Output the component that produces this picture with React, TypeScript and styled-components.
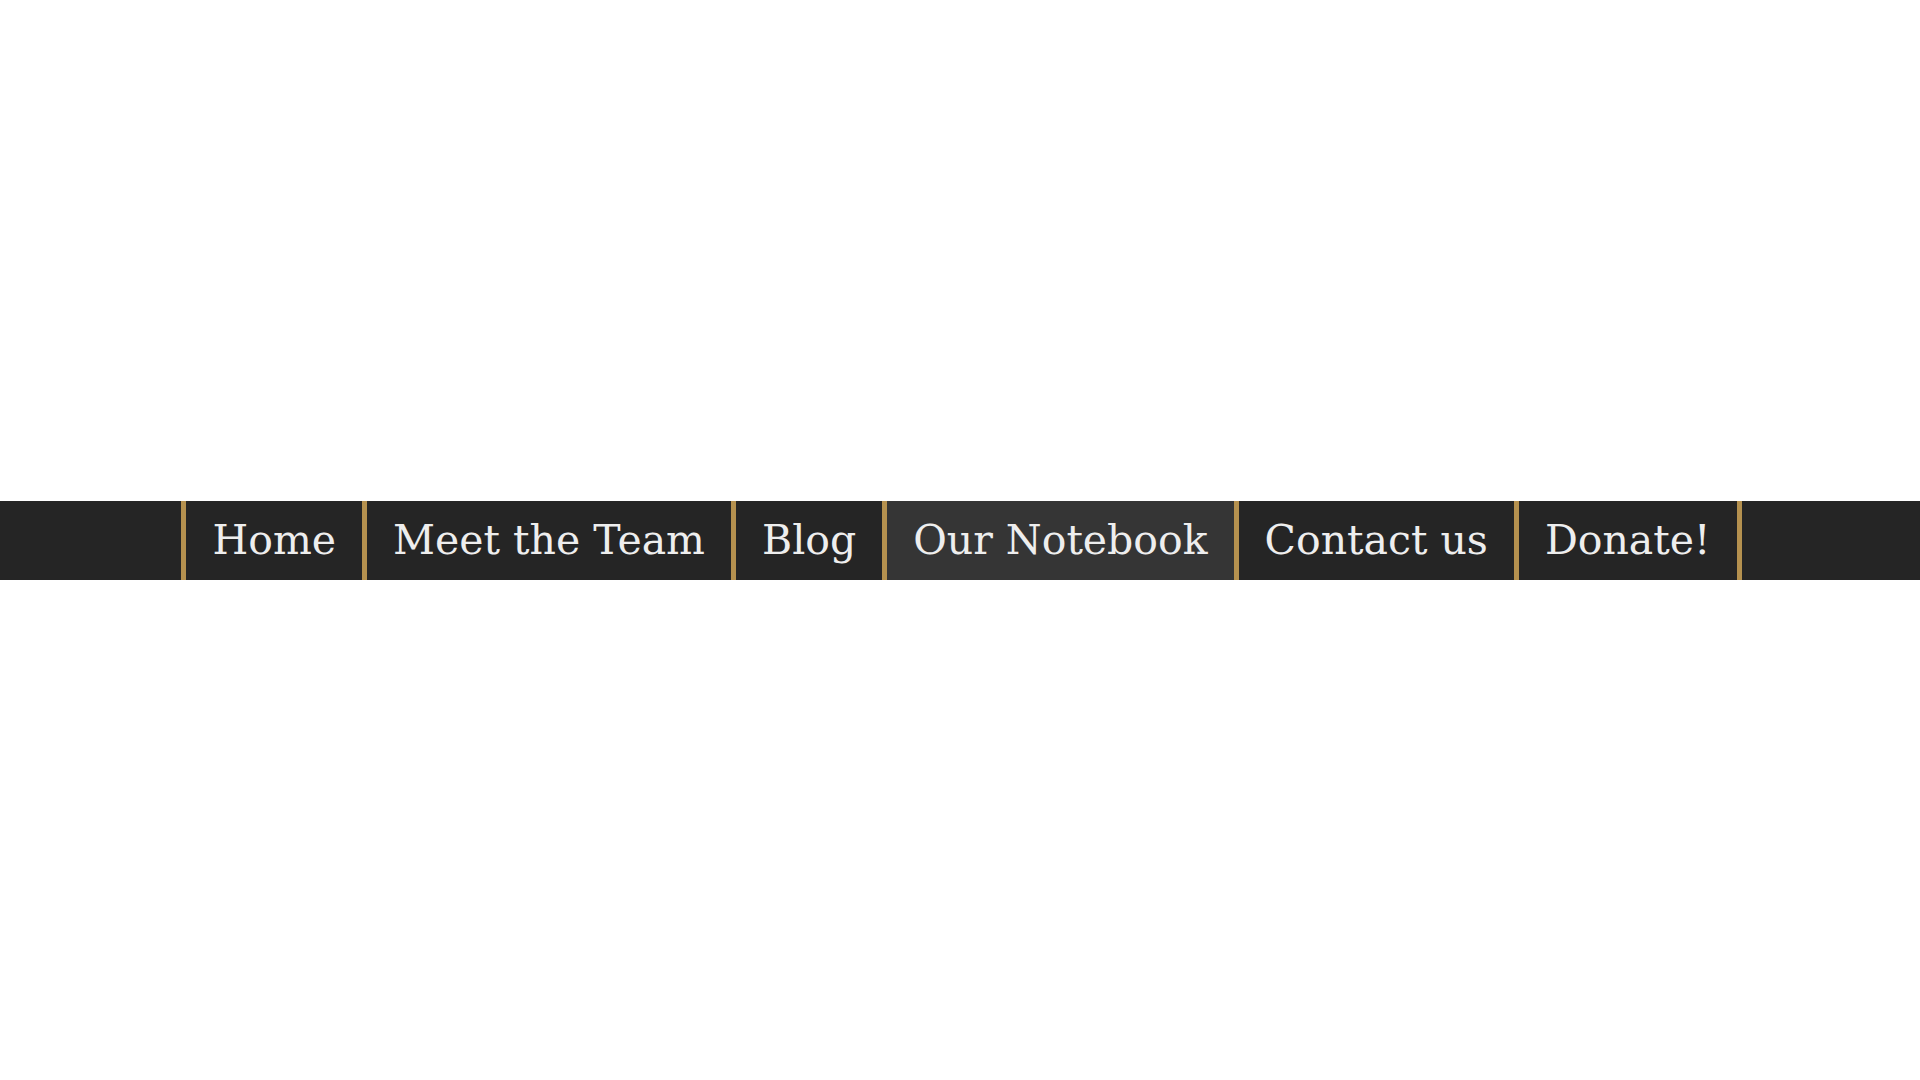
import React from "react";
import styled, { createGlobalStyle } from "styled-components";

const Global = createGlobalStyle`
  html, body {
    margin: 0;
    padding: 0;
    background: #ffffff;
  }
`;

const Page = styled.div`
  width: 100%;
  min-height: 1080px;
  padding-top: 501px;
  box-sizing: border-box;
`;

const NavBar = styled.nav`
  display: flex;
  justify-content: center;
  background: #252525;
  height: 79px;
`;

const NavList = styled.ul`
  display: flex;
  margin: 0;
  padding: 0 0 0 3px;
  list-style: none;
`;

const NavItem = styled.li<{ $active?: boolean; $last?: boolean }>`
  display: flex;
  align-items: center;
  padding: 0 26px 1px;
  height: 79px;
  border-left: 5px solid #b5914f;
  border-right: ${(p) => (p.$last ? "5px solid #b5914f" : "none")};
  background: ${(p) => (p.$active ? "#353535" : "transparent")};
  color: #eeeeee;
  font-family: "DejaVu Serif", "Liberation Serif", serif;
  font-size: 41px;
  white-space: nowrap;
  box-sizing: border-box;
`;

const items = ["Home", "Meet the Team", "Blog", "Our Notebook", "Contact us", "Donate!"];

export default function App() {
  return (
    <>
      <Global />
      <Page>
        <NavBar>
          <NavList>
            {items.map((label, i) => (
              <NavItem key={label} $active={label === "Our Notebook"} $last={i === items.length - 1}>
                {label}
              </NavItem>
            ))}
          </NavList>
        </NavBar>
      </Page>
    </>
  );
}
